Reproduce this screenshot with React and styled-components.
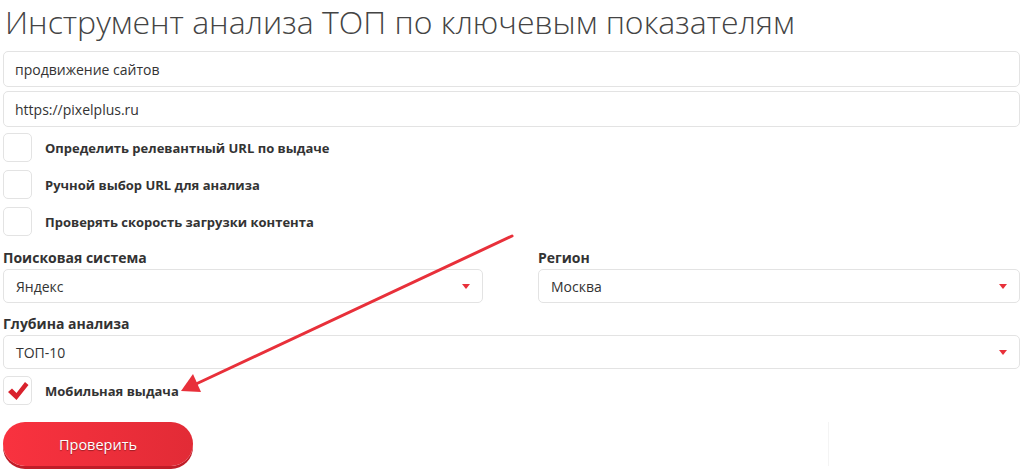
import React, { useState } from 'react'
import styled, { createGlobalStyle } from 'styled-components'

const GlobalStyle = createGlobalStyle`
  body {
    margin: 0;
    background: #fff;
    font-family: 'Open Sans', 'Liberation Sans', sans-serif;
    color: #333;
  }
`

const options = [
  { id: 'relevant', label: 'Определить релевантный URL по выдаче' },
  { id: 'manual', label: 'Ручной выбор URL для анализа' },
  { id: 'speed', label: 'Проверять скорость загрузки контента' }
]

const App = () => {
  const [checked, setChecked] = useState({ mobile: true })

  const toggle = id => setChecked({ ...checked, [id]: !checked[id] })

  return (
    <Page>
      <GlobalStyle />
      <Title>Инструмент анализа ТОП по ключевым показателям</Title>
      <Form>
        <TextField defaultValue="продвижение сайтов" />
        <TextField defaultValue="https://pixelplus.ru" />
        {options.map(o => (
          <CheckRow key={o.id} onClick={() => toggle(o.id)}>
            <Box>{checked[o.id] && <Tick />}</Box>
            <CheckLabel>{o.label}</CheckLabel>
          </CheckRow>
        ))}
        <Columns>
          <Field>
            <Label>Поисковая система</Label>
            <Select>
              <span>Яндекс</span>
              <Caret />
            </Select>
          </Field>
          <Field>
            <Label>Регион</Label>
            <Select>
              <span>Москва</span>
              <Caret />
            </Select>
          </Field>
        </Columns>
        <Field $spaced>
          <Label>Глубина анализа</Label>
          <Select>
            <span>ТОП-10</span>
            <Caret />
          </Select>
        </Field>
        <CheckRow onClick={() => toggle('mobile')}>
          <Box>{checked.mobile && <Tick />}</Box>
          <CheckLabel>Мобильная выдача</CheckLabel>
        </CheckRow>
        <Footer>
          <SubmitButton>Проверить</SubmitButton>
          <Divider />
        </Footer>
      </Form>
      <Pointer width="1024" height="470" viewBox="0 0 1024 470">
        <line x1="512" y1="236" x2="196" y2="384" stroke="#e8303a" strokeWidth="3" strokeLinecap="round" />
        <polygon points="181,391 193,374 201,392" fill="#e8303a" />
      </Pointer>
    </Page>
  )
}

const Tick = () => (
  <svg width="22" height="20" viewBox="0 0 22 20">
    <path d="M1 11 L5 7.5 L9.5 12 L18 1 L21.5 4 L9.5 19 Z" fill="#d9222d" />
  </svg>
)

const Caret = () => (
  <svg width="8" height="5" viewBox="0 0 8 5">
    <path d="M0 0 L8 0 L4 5 Z" fill="#e8303a" />
  </svg>
)

export default App

const Page = styled.div`
  position: relative;
  width: 1024px;
  height: 470px;
  overflow: hidden;
  padding-left: 3px;
  box-sizing: border-box;
`

const Title = styled.h1`
  margin: 0;
  padding: 0 0 0 2px;
  font-size: 32px;
  font-weight: 300;
  line-height: 44px;
  height: 40px;
  color: #444;
`

const Form = styled.div`
  display: flex;
  flex-direction: column;
  width: 1017px;
  margin-top: 11px;
`

const TextField = styled.input`
  box-sizing: border-box;
  height: 36px;
  margin-bottom: 4px;
  padding: 0 11px;
  border: 1px solid #e3e3e3;
  border-radius: 5px;
  font-family: 'Open Sans', 'Liberation Sans', sans-serif;
  font-size: 14px;
  color: #333;
  outline: none;
`

const CheckRow = styled.label`
  display: flex;
  align-items: center;
  gap: 13px;
  height: 29px;
  margin: 2px 0 6px;
  cursor: pointer;
`

const Box = styled.span`
  box-sizing: border-box;
  width: 29px;
  height: 29px;
  display: flex;
  align-items: center;
  justify-content: center;
  border: 1px solid #e3e3e3;
  border-radius: 5px;
  background: #fff;
`

const CheckLabel = styled.span`
  font-size: 13px;
  font-weight: 700;
  color: #333;
`

const Columns = styled.div`
  display: grid;
  grid-template-columns: 480px 1fr;
  gap: 55px;
`

const Field = styled.div`
  display: flex;
  flex-direction: column;
  margin: ${({ $spaced }) => ($spaced ? '5px 0' : '0')};
`

const Label = styled.div`
  font-size: 14px;
  font-weight: 700;
  line-height: 19px;
  margin-top: 6px;
  margin-bottom: 2px;
  color: #333;
`

const Select = styled.div`
  box-sizing: border-box;
  height: 34px;
  display: flex;
  align-items: center;
  justify-content: space-between;
  padding: 0 12px 0 12px;
  border: 1px solid #e3e3e3;
  border-radius: 5px;
  font-size: 14px;
  color: #333;
`

const Footer = styled.div`
  display: flex;
  align-items: flex-end;
  margin-top: 11px;
`

const SubmitButton = styled.button`
  width: 190px;
  height: 44px;
  border: none;
  border-radius: 22px;
  background: linear-gradient(to right, #f9323f, #e22b36);
  box-shadow: 0 3px 0 #c01d28;
  color: #fff;
  font-family: 'Open Sans', 'Liberation Sans', sans-serif;
  font-size: 14.5px;
  text-shadow: 0 1px 1px rgba(0, 0, 0, 0.35);
  cursor: pointer;
`

const Divider = styled.div`
  width: 1px;
  height: 44px;
  margin-left: 635px;
  background: #f4f4f4;
`

const Pointer = styled.svg`
  position: absolute;
  top: 0;
  left: 0;
  pointer-events: none;
`
